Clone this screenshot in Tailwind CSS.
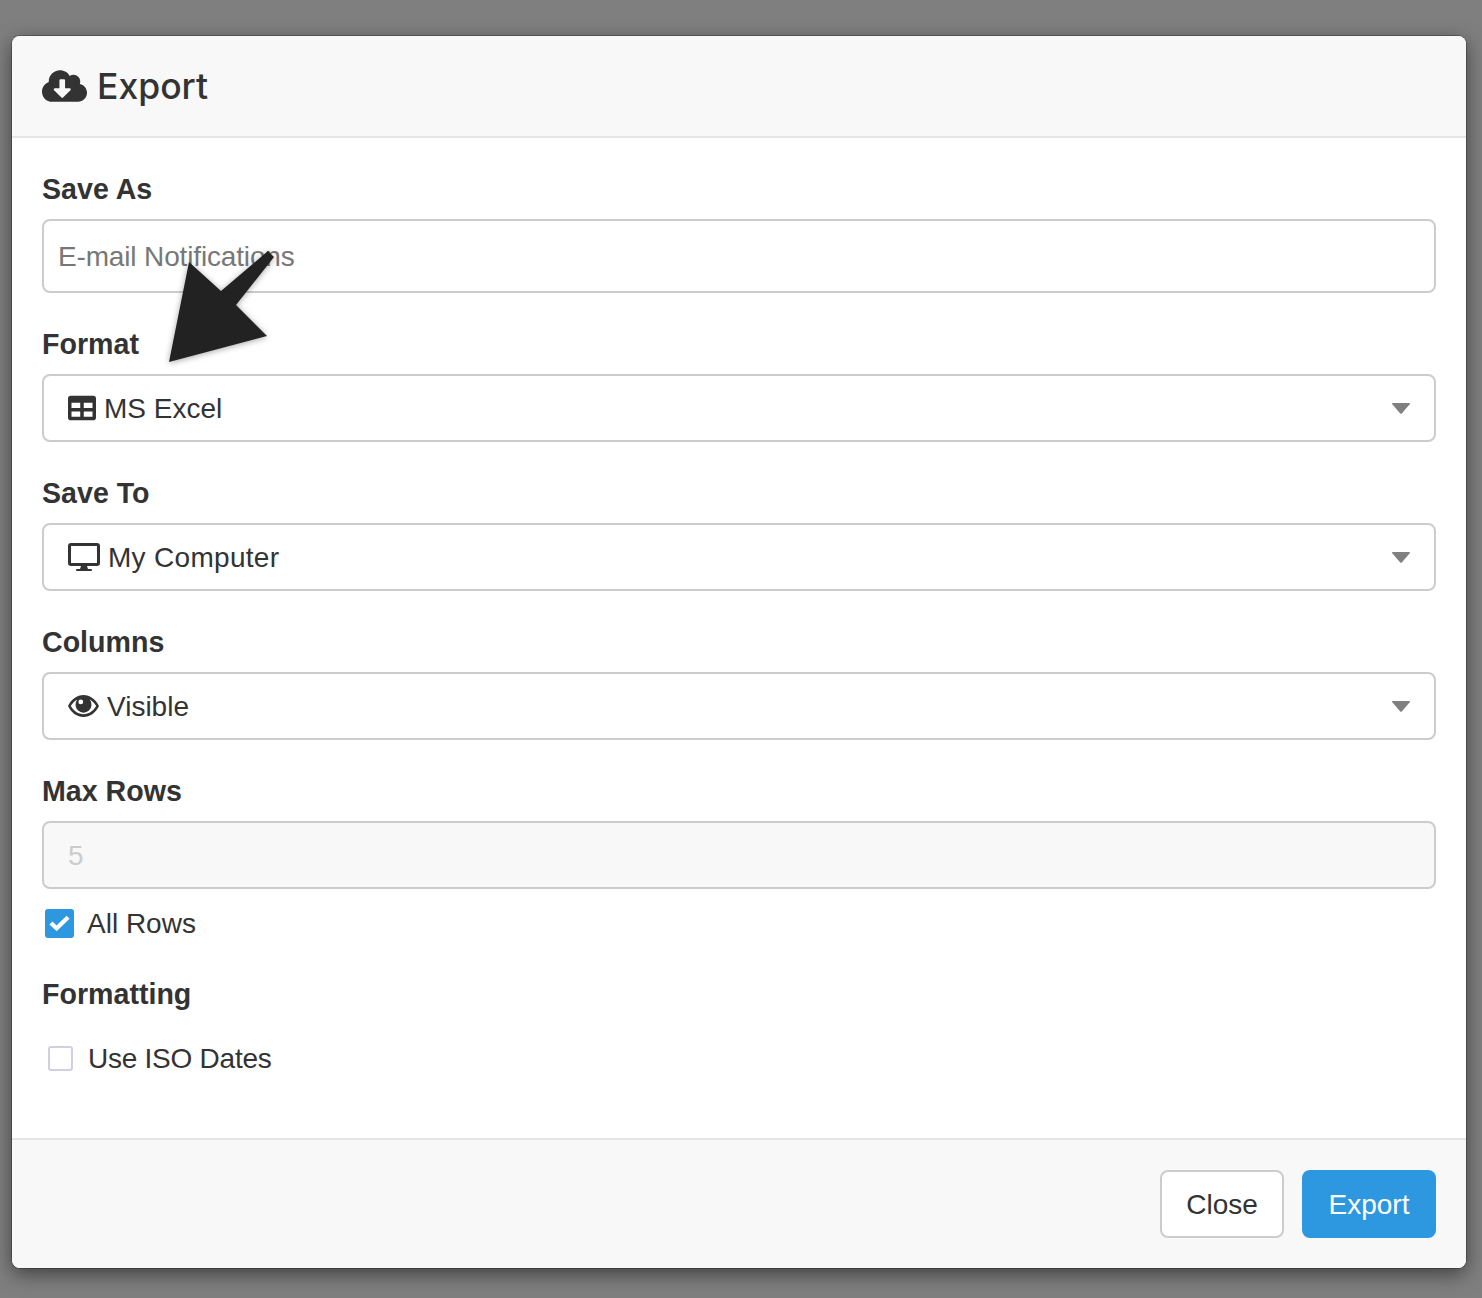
<!DOCTYPE html>
<html lang="en">
<head>
  <meta charset="UTF-8" />
  <title>Export</title>
  <script src="https://cdn.jsdelivr.net/npm/@tailwindcss/browser@4"></script>
</head>
<body class="relative h-[1298px] overflow-hidden bg-[#7f7f7f] pl-[12px] pr-[16px] pt-[36px] font-['Liberation_Sans',Arial,sans-serif] text-[28px] text-[#333]">
  <!-- MODAL -->
  <div class="flex h-[1232px] flex-col overflow-hidden rounded-[8px] bg-white shadow-[0_6px_20px_rgba(0,0,0,0.5),0_0_0_1px_rgba(0,0,0,0.25)]">
    <div class="flex h-[102px] items-center gap-[10px] border-b-2 border-[#e5e5e5] bg-[#f8f8f8] pl-[30px]">
      <svg class="h-[36px] w-[45px] fill-[#333]" viewBox="0 0 640 512"><path d="M537.6 226.6c4.1-10.7 6.4-22.4 6.4-34.6 0-53-43-96-96-96-19.7 0-38.1 6-53.3 16.2C367 64.2 315.3 32 256 32c-88.4 0-160 71.6-160 160 0 2.7.1 5.4.2 8.1C40.2 219.8 0 273.2 0 336c0 79.5 64.5 144 144 144h368c70.7 0 128-57.3 128-128 0-61.9-44-113.6-102.4-125.4zm-132.9 88.7L299.3 420.7c-6.2 6.2-16.4 6.2-22.6 0L171.3 315.3c-10.1-10.1-2.9-27.3 11.3-27.3H248V176c0-8.8 7.2-16 16-16h48c8.8 0 16 7.2 16 16v112h65.4c14.2 0 21.4 17.2 11.3 27.3z"/></svg>
      <h1 class="pt-[2px] font-['Inter',sans-serif] text-[35.5px] font-medium leading-[40px]">Export</h1>
    </div>

    <div class="flex flex-1 flex-col px-[30px] pt-[31px]">
      <label class="mb-[10px] block text-[28.6px] font-bold leading-[40px]">Save As</label>
      <input type="text" placeholder="E-mail Notifications" class="h-[74px] w-full rounded-[8px] border-2 border-[#ccc] bg-white px-[14px] pt-[2px] tracking-[-0.15px] placeholder:text-[#777]" />

      <label class="mb-[10px] mt-[31px] block text-[28.6px] font-bold leading-[40px]">Format</label>
      <div class="flex h-[68px] items-center justify-between rounded-[8px] border-2 border-[#ccc] px-[24px]">
        <span class="flex items-center gap-[8px]">
          <svg class="h-[28px] w-[28px] fill-[#333]" viewBox="0 0 512 512"><path d="M464 32H48C21.49 32 0 53.49 0 80v352c0 26.51 21.49 48 48 48h416c26.51 0 48-21.49 48-48V80c0-26.51-21.49-48-48-48zM224 416H64v-96h160v96zm0-160H64v-96h160v96zm224 160H288v-96h160v96zm0-160H288v-96h160v96z"/></svg>
          <span class="pt-[2px]">MS Excel</span>
        </span>
        <svg class="h-[11px] w-[18px] fill-[#808080]" viewBox="0 0 18 11"><path d="M1 0h16q1.500 0 .7 1.200L10 10.300q-1 1-2 0L.3 1.200Q-.5 0 1 0z"/></svg>
      </div>

      <label class="mb-[10px] mt-[31px] block text-[28.6px] font-bold leading-[40px]">Save To</label>
      <div class="flex h-[68px] items-center justify-between rounded-[8px] border-2 border-[#ccc] px-[24px]">
        <span class="flex items-center gap-[8px]">
          <svg class="h-[28px] w-[32px] fill-[#333]" viewBox="0 0 32 28"><path fill-rule="evenodd" d="M3 0h26a3 3 0 0 1 3 3v17a3 3 0 0 1-3 3H19l1 3h3a1 1 0 0 1 0 2H9a1 1 0 0 1 0-2h3l1-3H3a3 3 0 0 1-3-3V3a3 3 0 0 1 3-3zm0 3v17h26V3z"/></svg>
          <span class="pt-[2px] tracking-[0.3px]">My Computer</span>
        </span>
        <svg class="h-[11px] w-[18px] fill-[#808080]" viewBox="0 0 18 11"><path d="M1 0h16q1.500 0 .7 1.200L10 10.300q-1 1-2 0L.3 1.200Q-.5 0 1 0z"/></svg>
      </div>

      <label class="mb-[10px] mt-[31px] block text-[28.6px] font-bold leading-[40px]">Columns</label>
      <div class="flex h-[68px] items-center justify-between rounded-[8px] border-2 border-[#ccc] px-[24px]">
        <span class="flex items-center gap-[8px]">
          <svg class="h-[22px] w-[31px] fill-[#333]" viewBox="0 0 31 22"><path fill-rule="evenodd" d="M15.500 0C22 0 27.500 4 31 11c-3.500 7-9 11-15.500 11S3.500 18 0 11C3.500 4 9 0 15.500 0zM2.800 11c3 5 7.500 8.200 12.700 8.200S25.200 16 28.200 11c-1.700-2.800-3.900-5-6.500-6.400a8 8 0 1 1-12.400 0C6.700 6 4.500 8.200 2.800 11zm10-6.500a2.400 2.400 0 1 0 0 4.800 2.400 2.400 0 0 0 0-4.800z"/></svg>
          <span class="pt-[2px]">Visible</span>
        </span>
        <svg class="h-[11px] w-[18px] fill-[#808080]" viewBox="0 0 18 11"><path d="M1 0h16q1.500 0 .7 1.200L10 10.300q-1 1-2 0L.3 1.200Q-.5 0 1 0z"/></svg>
      </div>

      <label class="mb-[10px] mt-[31px] block text-[28.6px] font-bold leading-[40px]">Max Rows</label>
      <input type="text" value="5" disabled class="h-[68px] w-full rounded-[8px] border-2 border-[#ccc] bg-[#f8f8f8] px-[24px] pt-[2px] text-[#ccc]" />
      <div class="mt-[14px] flex h-[40px] items-center gap-[13px] pl-[3px]">
        <span class="flex h-[29px] w-[29px] items-center justify-center rounded-[3px] bg-[#2d98e0]">
          <svg class="h-[16px] w-[21px]" viewBox="0 0 22 16" fill="none" stroke="#fff" stroke-width="4.5"><path d="M2 8l6 5.500L20 2"/></svg>
        </span>
        <span class="pt-[2px]">All Rows</span>
      </div>

      <label class="mb-[24px] mt-[31px] block text-[28.6px] font-bold leading-[40px]">Formatting</label>
      <div class="flex h-[40px] items-center gap-[15px] pl-[6px]">
        <span class="h-[25px] w-[25px] rounded-[3px] border-2 border-[#d0d0e0] bg-white"></span>
        <span class="pt-[2px] tracking-[-0.25px]">Use ISO Dates</span>
      </div>
    </div>

    <div class="flex h-[130px] items-start justify-end gap-[18px] border-t-2 border-[#e5e5e5] bg-[#f8f8f8] pr-[30px] pt-[30px]">
      <button class="h-[68px] w-[124px] rounded-[8px] border-2 border-[#ccc] bg-white pt-[2px] text-[#333]">Close</button>
      <button class="h-[68px] w-[134px] rounded-[8px] bg-[#2d98e0] pt-[2px] text-white">Export</button>
    </div>
  </div>

  <!-- annotation arrow over the form -->
  <svg class="pointer-events-none absolute left-[160px] top-[245px] h-[125px] w-[125px] drop-shadow-[0_1px_3px_rgba(0,0,0,0.35)]" viewBox="160 245 125 125">
    <path fill="#222" d="M268 251L274 257L236 305L267 336L169 362L189 262L221 291z"/>
  </svg>
</body>
</html>
